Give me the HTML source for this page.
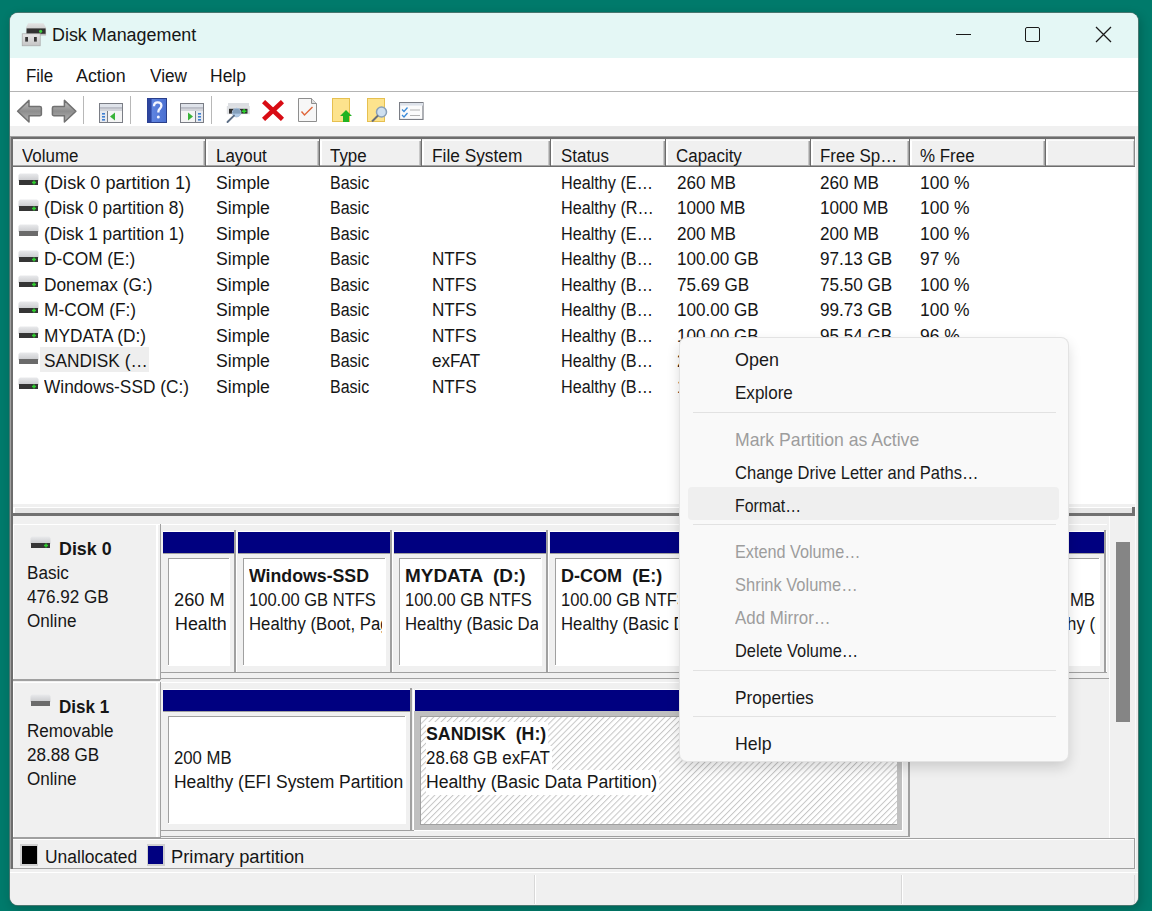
<!DOCTYPE html><html><head><meta charset="utf-8"><title>Disk Management</title><style>
html,body{margin:0;padding:0}
body{width:1152px;height:911px;position:relative;overflow:hidden;background:#007a6b;font-family:"Liberation Sans",sans-serif}
.a{position:absolute}
.t{position:absolute;white-space:pre;transform-origin:0 0;font-family:"Liberation Sans",sans-serif}
.clip{position:absolute;overflow:hidden}
</style></head><body><div class="a" style="left:9px;top:12px;width:1130px;height:894px;background:#48766f;border-radius:9px;box-shadow:2px 3px 10px rgba(0,30,25,0.25)"></div><div class="a" style="left:10px;top:13px;width:1128px;height:892px;background:#f0f0f0;border-radius:8px"></div><div class="a" style="left:10px;top:13px;width:1128px;height:45px;background:#e4f7f5;border-radius:8px 8px 0 0"></div><svg class="a" style="left:20px;top:21px" width="28" height="28" viewBox="0 0 28 28">
<defs><linearGradient id="gt" x1="0" y1="0" x2="0" y2="1"><stop offset="0" stop-color="#e4e4e4"/><stop offset="1" stop-color="#b8b8b8"/></linearGradient>
<linearGradient id="gu" x1="0" y1="0" x2="0" y2="1"><stop offset="0" stop-color="#e8e8e8"/><stop offset="1" stop-color="#c4c4c4"/></linearGradient></defs>
<path d="M8 2.2h15.5l2.6 4.6v7.6H6v-7.6z" fill="url(#gt)"/>
<rect x="6.6" y="7.4" width="19" height="5.4" fill="#323232"/>
<circle cx="20.6" cy="10.3" r="1.6" fill="#3fd13f"/>
<rect x="2.2" y="12.8" width="18" height="12" fill="url(#gu)" stroke="#a8a8a8" stroke-width="0.7"/>
<rect x="5.2" y="16" width="2.8" height="4.6" fill="#3a3a3a"/><rect x="14" y="16" width="2.8" height="4.6" fill="#3a3a3a"/>
</svg><div class="t" style="left:51.90px;top:25.22px;font-size:18px;line-height:20.68px;color:#161616;transform:scaleX(0.9946);">Disk Management</div><div class="a" style="left:956px;top:34px;width:15px;height:1.2px;background:#1a1a1a;"></div><div class="a" style="left:1025px;top:27px;width:12.6px;height:12.6px;border:1.2px solid #1a1a1a;border-radius:2px"></div><svg class="a" style="left:1095px;top:26px" width="17" height="17" viewBox="0 0 17 17"><path d="M1 1L16 16M16 1L1 16" stroke="#1a1a1a" stroke-width="1.25"/></svg><div class="a" style="left:10px;top:58px;width:1128px;height:33px;background:#ffffff;"></div><div class="t" style="left:25.65px;top:66.42px;font-size:18px;line-height:20.68px;color:#161616;transform:scaleX(0.9409);">File</div><div class="t" style="left:76.21px;top:66.42px;font-size:18px;line-height:20.68px;color:#161616;transform:scaleX(0.9914);">Action</div><div class="t" style="left:150.04px;top:66.42px;font-size:18px;line-height:20.68px;color:#161616;transform:scaleX(0.9560);">View</div><div class="t" style="left:210.03px;top:66.42px;font-size:18px;line-height:20.68px;color:#161616;transform:scaleX(0.9722);">Help</div><div class="a" style="left:10px;top:91px;width:1128px;height:1px;background:#b4b4b4;"></div><div class="a" style="left:10px;top:92px;width:1128px;height:34px;background:#ffffff;"></div><div class="a" style="left:10px;top:126px;width:1128px;height:10px;background:#f0f0f0;"></div><svg class="a" style="left:16px;top:99px" width="27" height="25" viewBox="0 0 27 25"><defs><linearGradient id="ag" x1="0" y1="0" x2="0" y2="1"><stop offset="0" stop-color="#c4c4c4"/><stop offset="0.5" stop-color="#8e8e8e"/><stop offset="1" stop-color="#b4b4b4"/></linearGradient></defs><path d="M1.6 12.2L13 1.4v6h10.8a1.6 1.6 0 0 1 1.6 1.6v6.2a1.6 1.6 0 0 1-1.6 1.6H13v6.2z" fill="url(#ag)" stroke="#717171" stroke-width="1.5" stroke-linejoin="round"/></svg><svg class="a" style="left:51px;top:99px" width="27" height="25" viewBox="0 0 27 25"><path d="M24.9 12.2L13.4 1.4v6H3a1.6 1.6 0 0 0-1.6 1.6v6.2a1.6 1.6 0 0 0 1.6 1.6h10.4v6.2z" fill="url(#ag)" stroke="#717171" stroke-width="1.5" stroke-linejoin="round"/></svg><div class="a" style="left:83px;top:96px;width:1px;height:28px;background:#b8b8b8;"></div><svg class="a" style="left:98.5px;top:103px" width="24" height="20" viewBox="0 0 24 20"><rect x="0.5" y="0.5" width="23" height="19" fill="#f4f4f4" stroke="#7a7d85"/><rect x="1" y="1" width="22" height="3.5" fill="#dfe3ea"/><line x1="1" y1="5" x2="23" y2="5" stroke="#8c90a0"/><line x1="1" y1="7" x2="23" y2="7" stroke="#b0b4c0"/><rect x="1" y="8" width="7" height="11" fill="#e6e9ef"/><line x1="8.5" y1="8" x2="8.5" y2="19" stroke="#7a7d85"/><rect x="3" y="10" width="3" height="1.6" fill="#3f7fd0"/><rect x="3" y="13" width="3" height="1.6" fill="#3f7fd0"/><rect x="3" y="16" width="3" height="1.6" fill="#3f7fd0"/><path d="M11 13.5l5-4v8z" fill="#39b339"/></svg><div class="a" style="left:130px;top:96px;width:1px;height:28px;background:#b8b8b8;"></div><svg class="a" style="left:146.5px;top:98px" width="20" height="25" viewBox="0 0 20 25"><defs><linearGradient id="hg" x1="0" y1="0" x2="1" y2="0"><stop offset="0" stop-color="#2b4fa8"/><stop offset="0.25" stop-color="#5f84e0"/><stop offset="1" stop-color="#4a6fd0"/></linearGradient></defs><rect x="0.5" y="0.5" width="19" height="24" fill="url(#hg)" stroke="#2a3f8a"/><rect x="0.5" y="0.5" width="4" height="24" fill="#2d45a0"/><path d="M7 8.2c0-2.5 1.5-3.8 3.7-3.8 2.3 0 3.7 1.4 3.7 3.4 0 2.6-3 3-3 5.6v1.1" fill="none" stroke="#f4f6ff" stroke-width="2.3"/><circle cx="11.3" cy="19" r="1.5" fill="#f4f6ff"/></svg><svg class="a" style="left:179.5px;top:103px" width="24" height="20" viewBox="0 0 24 20"><rect x="0.5" y="0.5" width="23" height="19" fill="#f4f4f4" stroke="#7a7d85"/><rect x="1" y="1" width="22" height="3.5" fill="#dfe3ea"/><line x1="1" y1="5" x2="23" y2="5" stroke="#8c90a0"/><line x1="1" y1="7" x2="23" y2="7" stroke="#b0b4c0"/><rect x="16" y="8" width="7" height="11" fill="#e6e9ef"/><line x1="15.5" y1="8" x2="15.5" y2="19" stroke="#7a7d85"/><rect x="18" y="10" width="3" height="1.6" fill="#3f7fd0"/><rect x="18" y="13" width="3" height="1.6" fill="#3f7fd0"/><rect x="18" y="16" width="3" height="1.6" fill="#3f7fd0"/><path d="M13 13.5l-5-4v8z" fill="#39b339"/></svg><div class="a" style="left:211px;top:96px;width:1px;height:28px;background:#b8b8b8;"></div><svg class="a" style="left:225.5px;top:102px" width="24" height="22" viewBox="0 0 24 22"><rect x="2" y="1" width="21" height="6" fill="#dcdee2"/><rect x="0.8" y="4" width="23" height="8.2" fill="#dfe1e4"/><rect x="3" y="6.8" width="18.5" height="4.8" fill="#2e2e2e"/><path d="M15.8 9.2h4.6M18.1 7v4.6" stroke="#2bd42b" stroke-width="1.5"/><circle cx="10.6" cy="10.6" r="4.3" fill="#9bbde0" fill-opacity="0.8" stroke="#a9bfd8" stroke-width="1"/><path d="M8 13.6L1.5 20" stroke="#5d6f86" stroke-width="1.9" stroke-linecap="round"/></svg><svg class="a" style="left:261.5px;top:100px" width="22" height="21" viewBox="0 0 22 21"><path d="M3.2 3.2L18.8 17.8M18.8 3.2L3.2 17.8" stroke="#d80c14" stroke-width="4.6" stroke-linecap="square"/></svg><svg class="a" style="left:297.5px;top:98px" width="19" height="24" viewBox="0 0 19 24"><path d="M0.5 0.5h13l5 5v18H0.5z" fill="#f7f7f7" stroke="#8e8e8e"/><path d="M13.5 0.5v5h5" fill="#e0e0e0" stroke="#8e8e8e"/><path d="M3.5 13.5l3 3.5 8-8" fill="none" stroke="#e0663a" stroke-width="1.4"/></svg><svg class="a" style="left:332px;top:98px" width="21" height="24" viewBox="0 0 21 24"><rect x="0.5" y="0.5" width="17" height="23" fill="#fde38d" stroke="#e6c050"/><rect x="0.5" y="0.5" width="17" height="23" fill="none" stroke="#e6c050"/><path d="M11 24v-6H8l6-6 6 6h-3v6z" fill="#22b322"/></svg><svg class="a" style="left:367px;top:98px" width="22" height="24" viewBox="0 0 22 24"><rect x="0.5" y="0.5" width="17" height="23" fill="#fde38d" stroke="#e6c050"/><circle cx="14.5" cy="14" r="5" fill="#cfe0f0" stroke="#8aa0b8" stroke-width="1.5"/><path d="M11 17.5L5 23.5" stroke="#6a6f78" stroke-width="2"/></svg><svg class="a" style="left:398.5px;top:101.5px" width="25" height="18" viewBox="0 0 25 18"><rect x="0.5" y="0.5" width="23.5" height="17" fill="#fbfbfb" stroke="#7a7d85" stroke-width="1.2"/><rect x="1" y="1" width="23" height="2.6" fill="#dde2ea"/><path d="M3 7.5l2 2 3.5-4M3 13l2 2 3.5-4" fill="none" stroke="#3a8ad8" stroke-width="1.3"/><path d="M11 8h10M11 13.5h10" stroke="#b4b4b4" stroke-width="1.2"/></svg><div class="a" style="left:10px;top:136px;width:1125px;height:368px;background:#ffffff;"></div><div class="a" style="left:10px;top:136px;width:1125px;height:1px;background:#a0a0a0;"></div><div class="a" style="left:10px;top:137px;width:1125px;height:2px;background:#6d6d6d;"></div><div class="a" style="left:10px;top:136px;width:1px;height:733px;background:#a0a0a0;"></div><div class="a" style="left:11px;top:137px;width:2px;height:732px;background:#6d6d6d;"></div><div class="a" style="left:1135px;top:136px;width:3px;height:733px;background:#ececec;"></div><div class="a" style="left:1135px;top:136px;width:1px;height:733px;background:#fafafa;"></div><div class="a" style="left:13px;top:139px;width:1122px;height:27px;background:#f0f0f0;"></div><div class="a" style="left:13px;top:140px;width:1122px;height:1px;background:#fbfbfb;"></div><div class="a" style="left:13px;top:165px;width:1122px;height:1px;background:#a6a6a6;"></div><div class="a" style="left:13px;top:166px;width:1122px;height:1px;background:#6d6d6d;"></div><div class="a" style="left:203px;top:141px;width:1px;height:24px;background:#c8c8c8;"></div><div class="a" style="left:204px;top:141px;width:1px;height:25px;background:#a0a0a0;"></div><div class="a" style="left:205px;top:139px;width:1.4px;height:27px;background:#6d6d6d;"></div><div class="a" style="left:206.4px;top:141px;width:1.2px;height:24px;background:#ffffff;"></div><div class="a" style="left:317px;top:141px;width:1px;height:24px;background:#c8c8c8;"></div><div class="a" style="left:318px;top:141px;width:1px;height:25px;background:#a0a0a0;"></div><div class="a" style="left:319px;top:139px;width:1.4px;height:27px;background:#6d6d6d;"></div><div class="a" style="left:320.4px;top:141px;width:1.2px;height:24px;background:#ffffff;"></div><div class="a" style="left:419px;top:141px;width:1px;height:24px;background:#c8c8c8;"></div><div class="a" style="left:420px;top:141px;width:1px;height:25px;background:#a0a0a0;"></div><div class="a" style="left:421px;top:139px;width:1.4px;height:27px;background:#6d6d6d;"></div><div class="a" style="left:422.4px;top:141px;width:1.2px;height:24px;background:#ffffff;"></div><div class="a" style="left:548px;top:141px;width:1px;height:24px;background:#c8c8c8;"></div><div class="a" style="left:549px;top:141px;width:1px;height:25px;background:#a0a0a0;"></div><div class="a" style="left:550px;top:139px;width:1.4px;height:27px;background:#6d6d6d;"></div><div class="a" style="left:551.4px;top:141px;width:1.2px;height:24px;background:#ffffff;"></div><div class="a" style="left:663px;top:141px;width:1px;height:24px;background:#c8c8c8;"></div><div class="a" style="left:664px;top:141px;width:1px;height:25px;background:#a0a0a0;"></div><div class="a" style="left:665px;top:139px;width:1.4px;height:27px;background:#6d6d6d;"></div><div class="a" style="left:666.4px;top:141px;width:1.2px;height:24px;background:#ffffff;"></div><div class="a" style="left:808px;top:141px;width:1px;height:24px;background:#c8c8c8;"></div><div class="a" style="left:809px;top:141px;width:1px;height:25px;background:#a0a0a0;"></div><div class="a" style="left:810px;top:139px;width:1.4px;height:27px;background:#6d6d6d;"></div><div class="a" style="left:811.4px;top:141px;width:1.2px;height:24px;background:#ffffff;"></div><div class="a" style="left:907px;top:141px;width:1px;height:24px;background:#c8c8c8;"></div><div class="a" style="left:908px;top:141px;width:1px;height:25px;background:#a0a0a0;"></div><div class="a" style="left:909px;top:139px;width:1.4px;height:27px;background:#6d6d6d;"></div><div class="a" style="left:910.4px;top:141px;width:1.2px;height:24px;background:#ffffff;"></div><div class="a" style="left:1043px;top:141px;width:1px;height:24px;background:#c8c8c8;"></div><div class="a" style="left:1044px;top:141px;width:1px;height:25px;background:#a0a0a0;"></div><div class="a" style="left:1045px;top:139px;width:1.4px;height:27px;background:#6d6d6d;"></div><div class="a" style="left:1046.4px;top:141px;width:1.2px;height:24px;background:#ffffff;"></div><div class="a" style="left:1133px;top:141px;width:1px;height:24px;background:#c8c8c8;"></div><div class="a" style="left:1134px;top:139px;width:1px;height:27px;background:#8a8a8a;"></div><div class="t" style="left:22.05px;top:146.02px;font-size:18px;line-height:20.68px;color:#161616;transform:scaleX(0.9400);">Volume</div><div class="t" style="left:216.05px;top:146.02px;font-size:18px;line-height:20.68px;color:#161616;transform:scaleX(0.9400);">Layout</div><div class="t" style="left:330.05px;top:146.02px;font-size:18px;line-height:20.68px;color:#161616;transform:scaleX(0.9400);">Type</div><div class="t" style="left:432.34px;top:146.02px;font-size:18px;line-height:20.68px;color:#161616;transform:scaleX(0.9603);">File System</div><div class="t" style="left:561.05px;top:146.02px;font-size:18px;line-height:20.68px;color:#161616;transform:scaleX(0.9400);">Status</div><div class="t" style="left:676.05px;top:146.02px;font-size:18px;line-height:20.68px;color:#161616;transform:scaleX(0.9400);">Capacity</div><div class="t" style="left:820.05px;top:146.02px;font-size:18px;line-height:20.68px;color:#161616;transform:scaleX(0.9400);">Free Sp…</div><div class="t" style="left:920.05px;top:146.02px;font-size:18px;line-height:20.68px;color:#161616;transform:scaleX(0.9400);">% Free</div><div class="a" style="left:40px;top:346.5px;width:109px;height:25px;background:#eeeeee;"></div><svg class="a" style="left:17.5px;top:173.0px" width="21" height="13" viewBox="0 0 21 13"><defs><linearGradient id="dg" x1="0" y1="0" x2="0" y2="1"><stop offset="0" stop-color="#e9eaec"/><stop offset="1" stop-color="#c9cacd"/></linearGradient></defs><path d="M2 0.5h17l1.5 1.5v6H0.5V2z" fill="url(#dg)"/><rect x="1" y="7" width="19" height="5" fill="#353535"/><path d="M14 9.5h4M16 7.5v4" stroke="#2ed02e" stroke-width="1.5"/></svg><div class="t" style="left:43.79px;top:172.92px;font-size:18px;line-height:20.68px;color:#161616;transform:scaleX(1.0064);">(Disk 0 partition 1)</div><div class="t" style="left:216.02px;top:172.92px;font-size:18px;line-height:20.68px;color:#161616;transform:scaleX(0.9800);">Simple</div><div class="t" style="left:330.10px;top:172.92px;font-size:18px;line-height:20.68px;color:#161616;transform:scaleX(0.8900);">Basic</div><div class="t" style="left:561.09px;top:172.92px;font-size:18px;line-height:20.68px;color:#161616;transform:scaleX(0.9000);">Healthy (E…</div><div class="t" style="left:677.04px;top:172.92px;font-size:18px;line-height:20.68px;color:#161616;transform:scaleX(0.9500);">260 MB</div><div class="t" style="left:820.04px;top:172.92px;font-size:18px;line-height:20.68px;color:#161616;transform:scaleX(0.9500);">260 MB</div><div class="t" style="left:920.03px;top:172.92px;font-size:18px;line-height:20.68px;color:#161616;transform:scaleX(0.9700);">100 %</div><svg class="a" style="left:17.5px;top:198.5px" width="21" height="13" viewBox="0 0 21 13"><defs><linearGradient id="dg" x1="0" y1="0" x2="0" y2="1"><stop offset="0" stop-color="#e9eaec"/><stop offset="1" stop-color="#c9cacd"/></linearGradient></defs><path d="M2 0.5h17l1.5 1.5v6H0.5V2z" fill="url(#dg)"/><rect x="1" y="7" width="19" height="5" fill="#353535"/><path d="M14 9.5h4M16 7.5v4" stroke="#2ed02e" stroke-width="1.5"/></svg><div class="t" style="left:43.84px;top:198.42px;font-size:18px;line-height:20.68px;color:#161616;transform:scaleX(0.9600);">(Disk 0 partition 8)</div><div class="t" style="left:216.02px;top:198.42px;font-size:18px;line-height:20.68px;color:#161616;transform:scaleX(0.9800);">Simple</div><div class="t" style="left:330.10px;top:198.42px;font-size:18px;line-height:20.68px;color:#161616;transform:scaleX(0.8900);">Basic</div><div class="t" style="left:561.09px;top:198.42px;font-size:18px;line-height:20.68px;color:#161616;transform:scaleX(0.9000);">Healthy (R…</div><div class="t" style="left:677.04px;top:198.42px;font-size:18px;line-height:20.68px;color:#161616;transform:scaleX(0.9500);">1000 MB</div><div class="t" style="left:820.04px;top:198.42px;font-size:18px;line-height:20.68px;color:#161616;transform:scaleX(0.9500);">1000 MB</div><div class="t" style="left:920.03px;top:198.42px;font-size:18px;line-height:20.68px;color:#161616;transform:scaleX(0.9700);">100 %</div><svg class="a" style="left:17.5px;top:224.0px" width="21" height="13" viewBox="0 0 21 13"><defs><linearGradient id="dg" x1="0" y1="0" x2="0" y2="1"><stop offset="0" stop-color="#e9eaec"/><stop offset="1" stop-color="#c9cacd"/></linearGradient></defs><path d="M2 0.5h17l1.5 1.5v6H0.5V2z" fill="url(#dg)"/><rect x="1" y="7" width="19" height="5" fill="#6b6b6b"/></svg><div class="t" style="left:43.84px;top:223.92px;font-size:18px;line-height:20.68px;color:#161616;transform:scaleX(0.9600);">(Disk 1 partition 1)</div><div class="t" style="left:216.02px;top:223.92px;font-size:18px;line-height:20.68px;color:#161616;transform:scaleX(0.9800);">Simple</div><div class="t" style="left:330.10px;top:223.92px;font-size:18px;line-height:20.68px;color:#161616;transform:scaleX(0.8900);">Basic</div><div class="t" style="left:561.09px;top:223.92px;font-size:18px;line-height:20.68px;color:#161616;transform:scaleX(0.9000);">Healthy (E…</div><div class="t" style="left:677.04px;top:223.92px;font-size:18px;line-height:20.68px;color:#161616;transform:scaleX(0.9500);">200 MB</div><div class="t" style="left:820.04px;top:223.92px;font-size:18px;line-height:20.68px;color:#161616;transform:scaleX(0.9500);">200 MB</div><div class="t" style="left:920.03px;top:223.92px;font-size:18px;line-height:20.68px;color:#161616;transform:scaleX(0.9700);">100 %</div><svg class="a" style="left:17.5px;top:249.5px" width="21" height="13" viewBox="0 0 21 13"><defs><linearGradient id="dg" x1="0" y1="0" x2="0" y2="1"><stop offset="0" stop-color="#e9eaec"/><stop offset="1" stop-color="#c9cacd"/></linearGradient></defs><path d="M2 0.5h17l1.5 1.5v6H0.5V2z" fill="url(#dg)"/><rect x="1" y="7" width="19" height="5" fill="#353535"/><path d="M14 9.5h4M16 7.5v4" stroke="#2ed02e" stroke-width="1.5"/></svg><div class="t" style="left:43.84px;top:249.42px;font-size:18px;line-height:20.68px;color:#161616;transform:scaleX(0.9600);">D-COM (E:)</div><div class="t" style="left:216.02px;top:249.42px;font-size:18px;line-height:20.68px;color:#161616;transform:scaleX(0.9800);">Simple</div><div class="t" style="left:330.10px;top:249.42px;font-size:18px;line-height:20.68px;color:#161616;transform:scaleX(0.8900);">Basic</div><div class="t" style="left:432.04px;top:249.42px;font-size:18px;line-height:20.68px;color:#161616;transform:scaleX(0.9500);">NTFS</div><div class="t" style="left:561.09px;top:249.42px;font-size:18px;line-height:20.68px;color:#161616;transform:scaleX(0.9000);">Healthy (B…</div><div class="t" style="left:677.04px;top:249.42px;font-size:18px;line-height:20.68px;color:#161616;transform:scaleX(0.9500);">100.00 GB</div><div class="t" style="left:820.04px;top:249.42px;font-size:18px;line-height:20.68px;color:#161616;transform:scaleX(0.9500);">97.13 GB</div><div class="t" style="left:920.03px;top:249.42px;font-size:18px;line-height:20.68px;color:#161616;transform:scaleX(0.9700);">97 %</div><svg class="a" style="left:17.5px;top:275.0px" width="21" height="13" viewBox="0 0 21 13"><defs><linearGradient id="dg" x1="0" y1="0" x2="0" y2="1"><stop offset="0" stop-color="#e9eaec"/><stop offset="1" stop-color="#c9cacd"/></linearGradient></defs><path d="M2 0.5h17l1.5 1.5v6H0.5V2z" fill="url(#dg)"/><rect x="1" y="7" width="19" height="5" fill="#353535"/><path d="M14 9.5h4M16 7.5v4" stroke="#2ed02e" stroke-width="1.5"/></svg><div class="t" style="left:43.84px;top:274.92px;font-size:18px;line-height:20.68px;color:#161616;transform:scaleX(0.9600);">Donemax (G:)</div><div class="t" style="left:216.02px;top:274.92px;font-size:18px;line-height:20.68px;color:#161616;transform:scaleX(0.9800);">Simple</div><div class="t" style="left:330.10px;top:274.92px;font-size:18px;line-height:20.68px;color:#161616;transform:scaleX(0.8900);">Basic</div><div class="t" style="left:432.04px;top:274.92px;font-size:18px;line-height:20.68px;color:#161616;transform:scaleX(0.9500);">NTFS</div><div class="t" style="left:561.09px;top:274.92px;font-size:18px;line-height:20.68px;color:#161616;transform:scaleX(0.9000);">Healthy (B…</div><div class="t" style="left:677.04px;top:274.92px;font-size:18px;line-height:20.68px;color:#161616;transform:scaleX(0.9500);">75.69 GB</div><div class="t" style="left:820.04px;top:274.92px;font-size:18px;line-height:20.68px;color:#161616;transform:scaleX(0.9500);">75.50 GB</div><div class="t" style="left:920.03px;top:274.92px;font-size:18px;line-height:20.68px;color:#161616;transform:scaleX(0.9700);">100 %</div><svg class="a" style="left:17.5px;top:300.5px" width="21" height="13" viewBox="0 0 21 13"><defs><linearGradient id="dg" x1="0" y1="0" x2="0" y2="1"><stop offset="0" stop-color="#e9eaec"/><stop offset="1" stop-color="#c9cacd"/></linearGradient></defs><path d="M2 0.5h17l1.5 1.5v6H0.5V2z" fill="url(#dg)"/><rect x="1" y="7" width="19" height="5" fill="#353535"/><path d="M14 9.5h4M16 7.5v4" stroke="#2ed02e" stroke-width="1.5"/></svg><div class="t" style="left:43.84px;top:300.42px;font-size:18px;line-height:20.68px;color:#161616;transform:scaleX(0.9600);">M-COM (F:)</div><div class="t" style="left:216.02px;top:300.42px;font-size:18px;line-height:20.68px;color:#161616;transform:scaleX(0.9800);">Simple</div><div class="t" style="left:330.10px;top:300.42px;font-size:18px;line-height:20.68px;color:#161616;transform:scaleX(0.8900);">Basic</div><div class="t" style="left:432.04px;top:300.42px;font-size:18px;line-height:20.68px;color:#161616;transform:scaleX(0.9500);">NTFS</div><div class="t" style="left:561.09px;top:300.42px;font-size:18px;line-height:20.68px;color:#161616;transform:scaleX(0.9000);">Healthy (B…</div><div class="t" style="left:677.04px;top:300.42px;font-size:18px;line-height:20.68px;color:#161616;transform:scaleX(0.9500);">100.00 GB</div><div class="t" style="left:820.04px;top:300.42px;font-size:18px;line-height:20.68px;color:#161616;transform:scaleX(0.9500);">99.73 GB</div><div class="t" style="left:920.03px;top:300.42px;font-size:18px;line-height:20.68px;color:#161616;transform:scaleX(0.9700);">100 %</div><svg class="a" style="left:17.5px;top:326.0px" width="21" height="13" viewBox="0 0 21 13"><defs><linearGradient id="dg" x1="0" y1="0" x2="0" y2="1"><stop offset="0" stop-color="#e9eaec"/><stop offset="1" stop-color="#c9cacd"/></linearGradient></defs><path d="M2 0.5h17l1.5 1.5v6H0.5V2z" fill="url(#dg)"/><rect x="1" y="7" width="19" height="5" fill="#353535"/><path d="M14 9.5h4M16 7.5v4" stroke="#2ed02e" stroke-width="1.5"/></svg><div class="t" style="left:43.84px;top:325.92px;font-size:18px;line-height:20.68px;color:#161616;transform:scaleX(0.9600);">MYDATA (D:)</div><div class="t" style="left:216.02px;top:325.92px;font-size:18px;line-height:20.68px;color:#161616;transform:scaleX(0.9800);">Simple</div><div class="t" style="left:330.10px;top:325.92px;font-size:18px;line-height:20.68px;color:#161616;transform:scaleX(0.8900);">Basic</div><div class="t" style="left:432.04px;top:325.92px;font-size:18px;line-height:20.68px;color:#161616;transform:scaleX(0.9500);">NTFS</div><div class="t" style="left:561.09px;top:325.92px;font-size:18px;line-height:20.68px;color:#161616;transform:scaleX(0.9000);">Healthy (B…</div><div class="t" style="left:677.04px;top:325.92px;font-size:18px;line-height:20.68px;color:#161616;transform:scaleX(0.9500);">100.00 GB</div><div class="t" style="left:820.04px;top:325.92px;font-size:18px;line-height:20.68px;color:#161616;transform:scaleX(0.9500);">95.54 GB</div><div class="t" style="left:920.03px;top:325.92px;font-size:18px;line-height:20.68px;color:#161616;transform:scaleX(0.9700);">96 %</div><svg class="a" style="left:17.5px;top:351.5px" width="21" height="13" viewBox="0 0 21 13"><defs><linearGradient id="dg" x1="0" y1="0" x2="0" y2="1"><stop offset="0" stop-color="#e9eaec"/><stop offset="1" stop-color="#c9cacd"/></linearGradient></defs><path d="M2 0.5h17l1.5 1.5v6H0.5V2z" fill="url(#dg)"/><rect x="1" y="7" width="19" height="5" fill="#6b6b6b"/></svg><div class="t" style="left:43.84px;top:351.42px;font-size:18px;line-height:20.68px;color:#161616;transform:scaleX(0.9600);">SANDISK (…</div><div class="t" style="left:216.02px;top:351.42px;font-size:18px;line-height:20.68px;color:#161616;transform:scaleX(0.9800);">Simple</div><div class="t" style="left:330.10px;top:351.42px;font-size:18px;line-height:20.68px;color:#161616;transform:scaleX(0.8900);">Basic</div><div class="t" style="left:432.04px;top:351.42px;font-size:18px;line-height:20.68px;color:#161616;transform:scaleX(0.9500);">exFAT</div><div class="t" style="left:561.09px;top:351.42px;font-size:18px;line-height:20.68px;color:#161616;transform:scaleX(0.9000);">Healthy (B…</div><div class="t" style="left:677.04px;top:351.42px;font-size:18px;line-height:20.68px;color:#161616;transform:scaleX(0.9500);">28.68 GB</div><div class="t" style="left:820.04px;top:351.42px;font-size:18px;line-height:20.68px;color:#161616;transform:scaleX(0.9500);">28.68 GB</div><div class="t" style="left:920.03px;top:351.42px;font-size:18px;line-height:20.68px;color:#161616;transform:scaleX(0.9700);">100 %</div><svg class="a" style="left:17.5px;top:377.0px" width="21" height="13" viewBox="0 0 21 13"><defs><linearGradient id="dg" x1="0" y1="0" x2="0" y2="1"><stop offset="0" stop-color="#e9eaec"/><stop offset="1" stop-color="#c9cacd"/></linearGradient></defs><path d="M2 0.5h17l1.5 1.5v6H0.5V2z" fill="url(#dg)"/><rect x="1" y="7" width="19" height="5" fill="#353535"/><path d="M14 9.5h4M16 7.5v4" stroke="#2ed02e" stroke-width="1.5"/></svg><div class="t" style="left:43.84px;top:376.92px;font-size:18px;line-height:20.68px;color:#161616;transform:scaleX(0.9600);">Windows-SSD (C:)</div><div class="t" style="left:216.02px;top:376.92px;font-size:18px;line-height:20.68px;color:#161616;transform:scaleX(0.9800);">Simple</div><div class="t" style="left:330.10px;top:376.92px;font-size:18px;line-height:20.68px;color:#161616;transform:scaleX(0.8900);">Basic</div><div class="t" style="left:432.04px;top:376.92px;font-size:18px;line-height:20.68px;color:#161616;transform:scaleX(0.9500);">NTFS</div><div class="t" style="left:561.09px;top:376.92px;font-size:18px;line-height:20.68px;color:#161616;transform:scaleX(0.9000);">Healthy (B…</div><div class="t" style="left:677.04px;top:376.92px;font-size:18px;line-height:20.68px;color:#161616;transform:scaleX(0.9500);">100.00 GB</div><div class="t" style="left:820.04px;top:376.92px;font-size:18px;line-height:20.68px;color:#161616;transform:scaleX(0.9500);">60.12 GB</div><div class="t" style="left:920.03px;top:376.92px;font-size:18px;line-height:20.68px;color:#161616;transform:scaleX(0.9700);">60 %</div><div class="a" style="left:13px;top:504px;width:1122px;height:3px;background:#f0f0f0;"></div><div class="a" style="left:13px;top:507px;width:1121px;height:1px;background:#ffffff;"></div><div class="a" style="left:13px;top:507px;width:2px;height:8px;background:#ffffff;"></div><div class="a" style="left:15px;top:508px;width:1118px;height:5px;background:#e6e6e6;"></div><div class="a" style="left:13px;top:513px;width:1122px;height:3px;background:#717171;"></div><div class="a" style="left:1132px;top:507px;width:3px;height:9px;background:#717171;"></div><div class="a" style="left:1109px;top:516px;width:1px;height:323px;background:#fdfdfd;"></div><div class="a" style="left:1115.5px;top:541.5px;width:14.5px;height:180.5px;background:#858585;"></div><div class="a" style="left:13px;top:524px;width:147px;height:1px;background:#ffffff;"></div><div class="a" style="left:13px;top:524px;width:1px;height:155px;background:#ffffff;"></div><div class="a" style="left:156px;top:524px;width:1.5px;height:155px;background:#ffffff;"></div><div class="a" style="left:160px;top:524px;width:1.4px;height:156px;background:#a0a0a0;"></div><div class="a" style="left:13px;top:679px;width:147px;height:1.6px;background:#a0a0a0;"></div><svg class="a" style="left:29.5px;top:535.5px" width="21" height="13" viewBox="0 0 21 13"><defs><linearGradient id="dg" x1="0" y1="0" x2="0" y2="1"><stop offset="0" stop-color="#e9eaec"/><stop offset="1" stop-color="#c9cacd"/></linearGradient></defs><path d="M2 0.5h17l1.5 1.5v6H0.5V2z" fill="url(#dg)"/><rect x="1" y="7" width="19" height="5" fill="#353535"/><path d="M14 9.5h4M16 7.5v4" stroke="#2ed02e" stroke-width="1.5"/></svg><div class="t" style="left:58.61px;top:539.02px;font-size:18px;line-height:20.68px;color:#161616;font-weight:bold;transform:scaleX(0.9916);">Disk 0</div><div class="t" style="left:27.44px;top:563.32px;font-size:18px;line-height:20.68px;color:#161616;transform:scaleX(0.9500);">Basic</div><div class="t" style="left:27.44px;top:587.32px;font-size:18px;line-height:20.68px;color:#161616;transform:scaleX(0.9500);">476.92 GB</div><div class="t" style="left:27.44px;top:611.32px;font-size:18px;line-height:20.68px;color:#161616;transform:scaleX(0.9500);">Online</div><div class="a" style="left:161.4px;top:524px;width:945.6px;height:1.2px;background:#ffffff;"></div><div class="a" style="left:161.4px;top:672px;width:945.6px;height:1.2px;background:#a0a0a0;"></div><div class="a" style="left:161.4px;top:678px;width:947.6px;height:1.2px;background:#a0a0a0;"></div><div class="a" style="left:163px;top:531px;width:71px;height:1px;background:#ffffff;"></div><div class="a" style="left:163px;top:532px;width:71px;height:21px;background:#000080;"></div><div class="a" style="left:163px;top:553px;width:73px;height:1.4px;background:#a0a0a0;"></div><div class="a" style="left:234px;top:530px;width:2.2px;height:143px;background:#a0a0a0;"></div><div class="a" style="left:236.2px;top:531px;width:1.2px;height:141px;background:#ffffff;"></div><div class="a" style="left:167.5px;top:558px;width:62.0px;height:108px;background:#ffffff;"></div><div class="a" style="left:167.5px;top:558px;width:61.0px;height:1.4px;background:#a0a0a0;"></div><div class="a" style="left:167.5px;top:558px;width:1.4px;height:107px;background:#a0a0a0;"></div><div class="clip" style="left:168.5px;top:559px;width:57.0px;height:105px"><div class="t" style="left:5.99px;top:30.92px;font-size:18px;line-height:20.68px;color:#161616;transform:scaleX(1.0134);">260 M</div><div class="t" style="left:6.01px;top:54.92px;font-size:18px;line-height:20.68px;color:#161616;transform:scaleX(0.9936);">Health</div></div><div class="a" style="left:238px;top:531px;width:152px;height:1px;background:#ffffff;"></div><div class="a" style="left:238px;top:532px;width:152px;height:21px;background:#000080;"></div><div class="a" style="left:238px;top:553px;width:154px;height:1.4px;background:#a0a0a0;"></div><div class="a" style="left:390px;top:530px;width:2.2px;height:143px;background:#a0a0a0;"></div><div class="a" style="left:392.2px;top:531px;width:1.2px;height:141px;background:#ffffff;"></div><div class="a" style="left:243px;top:558px;width:142.5px;height:108px;background:#ffffff;"></div><div class="a" style="left:243px;top:558px;width:141.5px;height:1.4px;background:#a0a0a0;"></div><div class="a" style="left:243px;top:558px;width:1.4px;height:107px;background:#a0a0a0;"></div><div class="clip" style="left:244px;top:559px;width:137.5px;height:105px"><div class="t" style="left:5.01px;top:6.92px;font-size:18px;line-height:20.68px;color:#161616;font-weight:bold;transform:scaleX(0.9849);">Windows-SSD</div><div class="t" style="left:5.07px;top:30.92px;font-size:18px;line-height:20.68px;color:#161616;transform:scaleX(0.9191);">100.00 GB NTFS</div><div class="t" style="left:5.06px;top:54.92px;font-size:18px;line-height:20.68px;color:#161616;transform:scaleX(0.9300);">Healthy (Boot, Page File, Crash Dump, Basic Data Partition)</div></div><div class="a" style="left:394px;top:531px;width:152px;height:1px;background:#ffffff;"></div><div class="a" style="left:394px;top:532px;width:152px;height:21px;background:#000080;"></div><div class="a" style="left:394px;top:553px;width:154px;height:1.4px;background:#a0a0a0;"></div><div class="a" style="left:546px;top:530px;width:2.2px;height:143px;background:#a0a0a0;"></div><div class="a" style="left:548.2px;top:531px;width:1.2px;height:141px;background:#ffffff;"></div><div class="a" style="left:399px;top:558px;width:142.5px;height:108px;background:#ffffff;"></div><div class="a" style="left:399px;top:558px;width:141.5px;height:1.4px;background:#a0a0a0;"></div><div class="a" style="left:399px;top:558px;width:1.4px;height:107px;background:#a0a0a0;"></div><div class="clip" style="left:400px;top:559px;width:137.5px;height:105px"><div class="t" style="left:4.95px;top:6.92px;font-size:18px;line-height:20.68px;color:#161616;font-weight:bold;transform:scaleX(1.0520);">MYDATA  (D:)</div><div class="t" style="left:5.07px;top:30.92px;font-size:18px;line-height:20.68px;color:#161616;transform:scaleX(0.9191);">100.00 GB NTFS</div><div class="t" style="left:5.06px;top:54.92px;font-size:18px;line-height:20.68px;color:#161616;transform:scaleX(0.9300);">Healthy (Basic Data Partition)</div></div><div class="a" style="left:550px;top:531px;width:136px;height:1px;background:#ffffff;"></div><div class="a" style="left:550px;top:532px;width:136px;height:21px;background:#000080;"></div><div class="a" style="left:550px;top:553px;width:138px;height:1.4px;background:#a0a0a0;"></div><div class="a" style="left:686px;top:530px;width:2.2px;height:143px;background:#a0a0a0;"></div><div class="a" style="left:688.2px;top:531px;width:1.2px;height:141px;background:#ffffff;"></div><div class="a" style="left:555px;top:558px;width:126.5px;height:108px;background:#ffffff;"></div><div class="a" style="left:555px;top:558px;width:125.5px;height:1.4px;background:#a0a0a0;"></div><div class="a" style="left:555px;top:558px;width:1.4px;height:107px;background:#a0a0a0;"></div><div class="clip" style="left:556px;top:559px;width:121.5px;height:105px"><div class="t" style="left:5.00px;top:6.92px;font-size:18px;line-height:20.68px;color:#161616;font-weight:bold;transform:scaleX(1.0021);">D-COM  (E:)</div><div class="t" style="left:5.07px;top:30.92px;font-size:18px;line-height:20.68px;color:#161616;transform:scaleX(0.9191);">100.00 GB NTFS</div><div class="t" style="left:5.06px;top:54.92px;font-size:18px;line-height:20.68px;color:#161616;transform:scaleX(0.9300);">Healthy (Basic Data Partition)</div></div><div class="a" style="left:690px;top:531px;width:168px;height:1px;background:#ffffff;"></div><div class="a" style="left:690px;top:532px;width:168px;height:21px;background:#000080;"></div><div class="a" style="left:690px;top:553px;width:170px;height:1.4px;background:#a0a0a0;"></div><div class="a" style="left:858px;top:530px;width:2.2px;height:143px;background:#a0a0a0;"></div><div class="a" style="left:860.2px;top:531px;width:1.2px;height:141px;background:#ffffff;"></div><div class="a" style="left:695px;top:558px;width:158.5px;height:108px;background:#ffffff;"></div><div class="a" style="left:695px;top:558px;width:157.5px;height:1.4px;background:#a0a0a0;"></div><div class="a" style="left:695px;top:558px;width:1.4px;height:107px;background:#a0a0a0;"></div><div class="clip" style="left:696px;top:559px;width:153.5px;height:105px"><div class="t" style="left:4.98px;top:6.92px;font-size:18px;line-height:20.68px;color:#161616;font-weight:bold;transform:scaleX(1.0219);">M-COM  (F:)</div><div class="t" style="left:5.07px;top:30.92px;font-size:18px;line-height:20.68px;color:#161616;transform:scaleX(0.9191);">100.00 GB NTFS</div><div class="t" style="left:5.06px;top:54.92px;font-size:18px;line-height:20.68px;color:#161616;transform:scaleX(0.9300);">Healthy (Basic Data Partition)</div></div><div class="a" style="left:862px;top:531px;width:151px;height:1px;background:#ffffff;"></div><div class="a" style="left:862px;top:532px;width:151px;height:21px;background:#000080;"></div><div class="a" style="left:862px;top:553px;width:153px;height:1.4px;background:#a0a0a0;"></div><div class="a" style="left:1013px;top:530px;width:2.2px;height:143px;background:#a0a0a0;"></div><div class="a" style="left:1015.2px;top:531px;width:1.2px;height:141px;background:#ffffff;"></div><div class="a" style="left:867px;top:558px;width:141.5px;height:108px;background:#ffffff;"></div><div class="a" style="left:867px;top:558px;width:140.5px;height:1.4px;background:#a0a0a0;"></div><div class="a" style="left:867px;top:558px;width:1.4px;height:107px;background:#a0a0a0;"></div><div class="clip" style="left:868px;top:559px;width:136.5px;height:105px"><div class="t" style="left:5.06px;top:6.92px;font-size:18px;line-height:20.68px;color:#161616;font-weight:bold;transform:scaleX(0.9300);">Donemax  (G:)</div><div class="t" style="left:5.06px;top:30.92px;font-size:18px;line-height:20.68px;color:#161616;transform:scaleX(0.9300);">75.69 GB NTFS</div><div class="t" style="left:5.06px;top:54.92px;font-size:18px;line-height:20.68px;color:#161616;transform:scaleX(0.9300);">Healthy (Basic Data Partition)</div></div><div class="a" style="left:1017px;top:531px;width:87px;height:1px;background:#ffffff;"></div><div class="a" style="left:1017px;top:532px;width:87px;height:21px;background:#000080;"></div><div class="a" style="left:1017px;top:553px;width:89px;height:1.4px;background:#a0a0a0;"></div><div class="a" style="left:1104px;top:530px;width:2.2px;height:143px;background:#a0a0a0;"></div><div class="a" style="left:1106.2px;top:531px;width:1.2px;height:141px;background:#ffffff;"></div><div class="a" style="left:1022px;top:558px;width:77.5px;height:108px;background:#ffffff;"></div><div class="a" style="left:1022px;top:558px;width:76.5px;height:1.4px;background:#a0a0a0;"></div><div class="a" style="left:1022px;top:558px;width:1.4px;height:107px;background:#a0a0a0;"></div><div class="clip" style="left:1023px;top:559px;width:72.5px;height:105px"><div class="t" style="left:5.06px;top:30.92px;font-size:18px;line-height:20.68px;color:#161616;transform:scaleX(0.9300);">1000 MB</div><div class="t" style="left:5.06px;top:54.92px;font-size:18px;line-height:20.68px;color:#161616;transform:scaleX(0.9300);">Healthy (Recovery Partition)</div></div><div class="a" style="left:13px;top:682px;width:147px;height:1px;background:#ffffff;"></div><div class="a" style="left:13px;top:682px;width:1px;height:155px;background:#ffffff;"></div><div class="a" style="left:156px;top:682px;width:1.5px;height:155px;background:#ffffff;"></div><div class="a" style="left:160px;top:682px;width:1.4px;height:156px;background:#a0a0a0;"></div><div class="a" style="left:13px;top:837px;width:147px;height:1.6px;background:#a0a0a0;"></div><svg class="a" style="left:29.5px;top:693.5px" width="21" height="13" viewBox="0 0 21 13"><defs><linearGradient id="dg" x1="0" y1="0" x2="0" y2="1"><stop offset="0" stop-color="#e9eaec"/><stop offset="1" stop-color="#c9cacd"/></linearGradient></defs><path d="M2 0.5h17l1.5 1.5v6H0.5V2z" fill="url(#dg)"/><rect x="1" y="7" width="19" height="5" fill="#6b6b6b"/></svg><div class="t" style="left:59.05px;top:697.02px;font-size:18px;line-height:20.68px;color:#161616;font-weight:bold;transform:scaleX(0.9463);">Disk 1</div><div class="t" style="left:27.44px;top:721.32px;font-size:18px;line-height:20.68px;color:#161616;transform:scaleX(0.9500);">Removable</div><div class="t" style="left:27.44px;top:745.32px;font-size:18px;line-height:20.68px;color:#161616;transform:scaleX(0.9500);">28.88 GB</div><div class="t" style="left:27.44px;top:769.32px;font-size:18px;line-height:20.68px;color:#161616;transform:scaleX(0.9500);">Online</div><div class="a" style="left:161.4px;top:682px;width:747.0px;height:1.2px;background:#ffffff;"></div><div class="a" style="left:161.4px;top:830px;width:252.20000000000002px;height:1.2px;background:#a0a0a0;"></div><div class="a" style="left:161.4px;top:836px;width:748.6px;height:1.2px;background:#a0a0a0;"></div><div class="a" style="left:908.4px;top:682px;width:1.6px;height:155.2px;background:#a0a0a0;"></div><div class="a" style="left:163px;top:689px;width:247.3px;height:1px;background:#ffffff;"></div><div class="a" style="left:163px;top:690px;width:247.3px;height:21px;background:#000080;"></div><div class="a" style="left:163px;top:711px;width:249.3px;height:1.4px;background:#a0a0a0;"></div><div class="a" style="left:410.3px;top:688px;width:2.2px;height:143px;background:#a0a0a0;"></div><div class="a" style="left:412.5px;top:689px;width:1.2px;height:141px;background:#ffffff;"></div><div class="a" style="left:167.5px;top:716px;width:238.5px;height:108px;background:#ffffff;"></div><div class="a" style="left:167.5px;top:716px;width:237.5px;height:1.4px;background:#a0a0a0;"></div><div class="a" style="left:167.5px;top:716px;width:1.4px;height:107px;background:#a0a0a0;"></div><div class="clip" style="left:168.5px;top:717px;width:234.5px;height:105px"><div class="t" style="left:5.86px;top:30.92px;font-size:18px;line-height:20.68px;color:#161616;transform:scaleX(0.9300);">200 MB</div><div class="t" style="left:5.83px;top:54.92px;font-size:18px;line-height:20.68px;color:#161616;transform:scaleX(0.9709);">Healthy (EFI System Partition</div></div><div class="a" style="left:415px;top:689px;width:490px;height:1px;background:#ffffff;"></div><div class="a" style="left:415px;top:690px;width:490px;height:21px;background:#000080;"></div><div class="a" style="left:905px;top:688px;width:2.2px;height:24px;background:#a0a0a0;"></div><div class="a" style="left:902px;top:712px;width:1px;height:118px;background:#ffffff;"></div><div class="a" style="left:413.6px;top:829.5px;width:489.4px;height:1px;background:#ffffff;"></div><div class="a" style="left:413.6px;top:711px;width:488.4px;height:118.5px;background:#c0c0c0;"></div><div class="a" style="left:419.6px;top:716px;width:477.4px;height:108.5px;background:#a0a0a0;"></div><svg class="a" style="left:420.6px;top:717.0px" width="476.3" height="107.3" viewBox="0 0 476.3 107.3"><defs><pattern id="hp" width="4.3" height="4.3" patternUnits="userSpaceOnUse" patternTransform="rotate(45)"><rect width="4.3" height="4.3" fill="#ffffff"/><rect x="0" y="0" width="1" height="4.3" fill="#c6c6c6"/></pattern></defs><rect width="476.3" height="107.3" fill="url(#hp)"/></svg><div class="t" style="left:426.01px;top:723.92px;font-size:18px;line-height:20.68px;color:#161616;font-weight:bold;transform:scaleX(0.9852);background:#ffffff;padding:2px 2px 2px 0;margin-top:-2px">SANDISK  (H:)</div><div class="t" style="left:426.05px;top:747.92px;font-size:18px;line-height:20.68px;color:#161616;transform:scaleX(0.9405);background:#ffffff;padding:2px 2px 2px 0;margin-top:-2px">28.68 GB exFAT</div><div class="t" style="left:426.02px;top:771.92px;font-size:18px;line-height:20.68px;color:#161616;transform:scaleX(0.9793);background:#ffffff;padding:2px 2px 2px 0;margin-top:-2px">Healthy (Basic Data Partition)</div><div class="a" style="left:13px;top:837.6px;width:1122px;height:1.4px;background:#a0a0a0;"></div><div class="a" style="left:13px;top:839px;width:1122px;height:1.4px;background:#ffffff;"></div><div class="a" style="left:13px;top:868px;width:1122px;height:1.4px;background:#a0a0a0;"></div><div class="a" style="left:1133.6px;top:839px;width:1.4px;height:30px;background:#a0a0a0;"></div><div class="a" style="left:19.8px;top:844px;width:18.5px;height:21.5px;background:#d0d0d0;"></div><div class="a" style="left:21.8px;top:846px;width:15.3px;height:18.3px;background:#000000;"></div><div class="t" style="left:44.93px;top:846.92px;font-size:18px;line-height:20.68px;color:#161616;transform:scaleX(0.9700);">Unallocated</div><div class="a" style="left:146.6px;top:844px;width:18.5px;height:21.5px;background:#d0d0d0;"></div><div class="a" style="left:148.2px;top:846px;width:15.3px;height:18.3px;background:#000080;"></div><div class="t" style="left:170.68px;top:846.92px;font-size:18px;line-height:20.68px;color:#161616;transform:scaleX(1.0172);">Primary partition</div><div class="a" style="left:10px;top:871.5px;width:1128px;height:1.4px;background:#ffffff;"></div><div class="a" style="left:10px;top:873px;width:1128px;height:32px;background:#f0f0f0;border-radius:0 0 8px 8px"></div><div class="a" style="left:534px;top:875px;width:1px;height:29px;background:#d8d8d8;"></div><div class="a" style="left:535px;top:875px;width:1px;height:29px;background:#ffffff;"></div><div class="a" style="left:901px;top:875px;width:1px;height:29px;background:#d8d8d8;"></div><div class="a" style="left:902px;top:875px;width:1px;height:29px;background:#ffffff;"></div><div class="a" style="left:1134px;top:875px;width:1px;height:29px;background:#d8d8d8;"></div><div class="a" style="left:680px;top:338px;width:387.5px;height:423.3px;background:#f9f9f9;border-radius:7px;box-shadow:0 0 0 1px #e3e3e3, 0 6px 14px rgba(0,0,0,0.16)"></div><div class="a" style="left:688.2px;top:487px;width:371px;height:32.5px;background:#efefef;border-radius:4px"></div><div class="a" style="left:692.5px;top:411.8px;width:363px;height:1.2px;background:#e2e2e2;"></div><div class="a" style="left:692.5px;top:524.3px;width:363px;height:1.2px;background:#e2e2e2;"></div><div class="a" style="left:692.5px;top:670.0px;width:363px;height:1.2px;background:#e2e2e2;"></div><div class="a" style="left:692.5px;top:716.1px;width:363px;height:1.2px;background:#e2e2e2;"></div><div class="t" style="left:735.35px;top:349.00px;font-size:19px;line-height:21.83px;color:#1a1a1a;transform:scaleX(0.9444);">Open</div><div class="t" style="left:735.39px;top:382.00px;font-size:19px;line-height:21.83px;color:#1a1a1a;transform:scaleX(0.8972);">Explore</div><div class="t" style="left:735.36px;top:428.60px;font-size:19px;line-height:21.83px;color:#9d9d9d;transform:scaleX(0.9278);">Mark Partition as Active</div><div class="t" style="left:735.42px;top:461.60px;font-size:19px;line-height:21.83px;color:#1a1a1a;transform:scaleX(0.8703);">Change Drive Letter and Paths…</div><div class="t" style="left:735.45px;top:494.60px;font-size:19px;line-height:21.83px;color:#1a1a1a;transform:scaleX(0.8347);">Format…</div><div class="t" style="left:735.43px;top:541.10px;font-size:19px;line-height:21.83px;color:#9d9d9d;transform:scaleX(0.8542);">Extend Volume…</div><div class="t" style="left:735.42px;top:574.10px;font-size:19px;line-height:21.83px;color:#9d9d9d;transform:scaleX(0.8670);">Shrink Volume…</div><div class="t" style="left:735.40px;top:607.10px;font-size:19px;line-height:21.83px;color:#9d9d9d;transform:scaleX(0.8887);">Add Mirror…</div><div class="t" style="left:735.42px;top:640.10px;font-size:19px;line-height:21.83px;color:#1a1a1a;transform:scaleX(0.8641);">Delete Volume…</div><div class="t" style="left:735.38px;top:686.60px;font-size:19px;line-height:21.83px;color:#1a1a1a;transform:scaleX(0.9087);">Properties</div><div class="t" style="left:735.36px;top:733.10px;font-size:19px;line-height:21.83px;color:#1a1a1a;transform:scaleX(0.9340);">Help</div></body></html>
